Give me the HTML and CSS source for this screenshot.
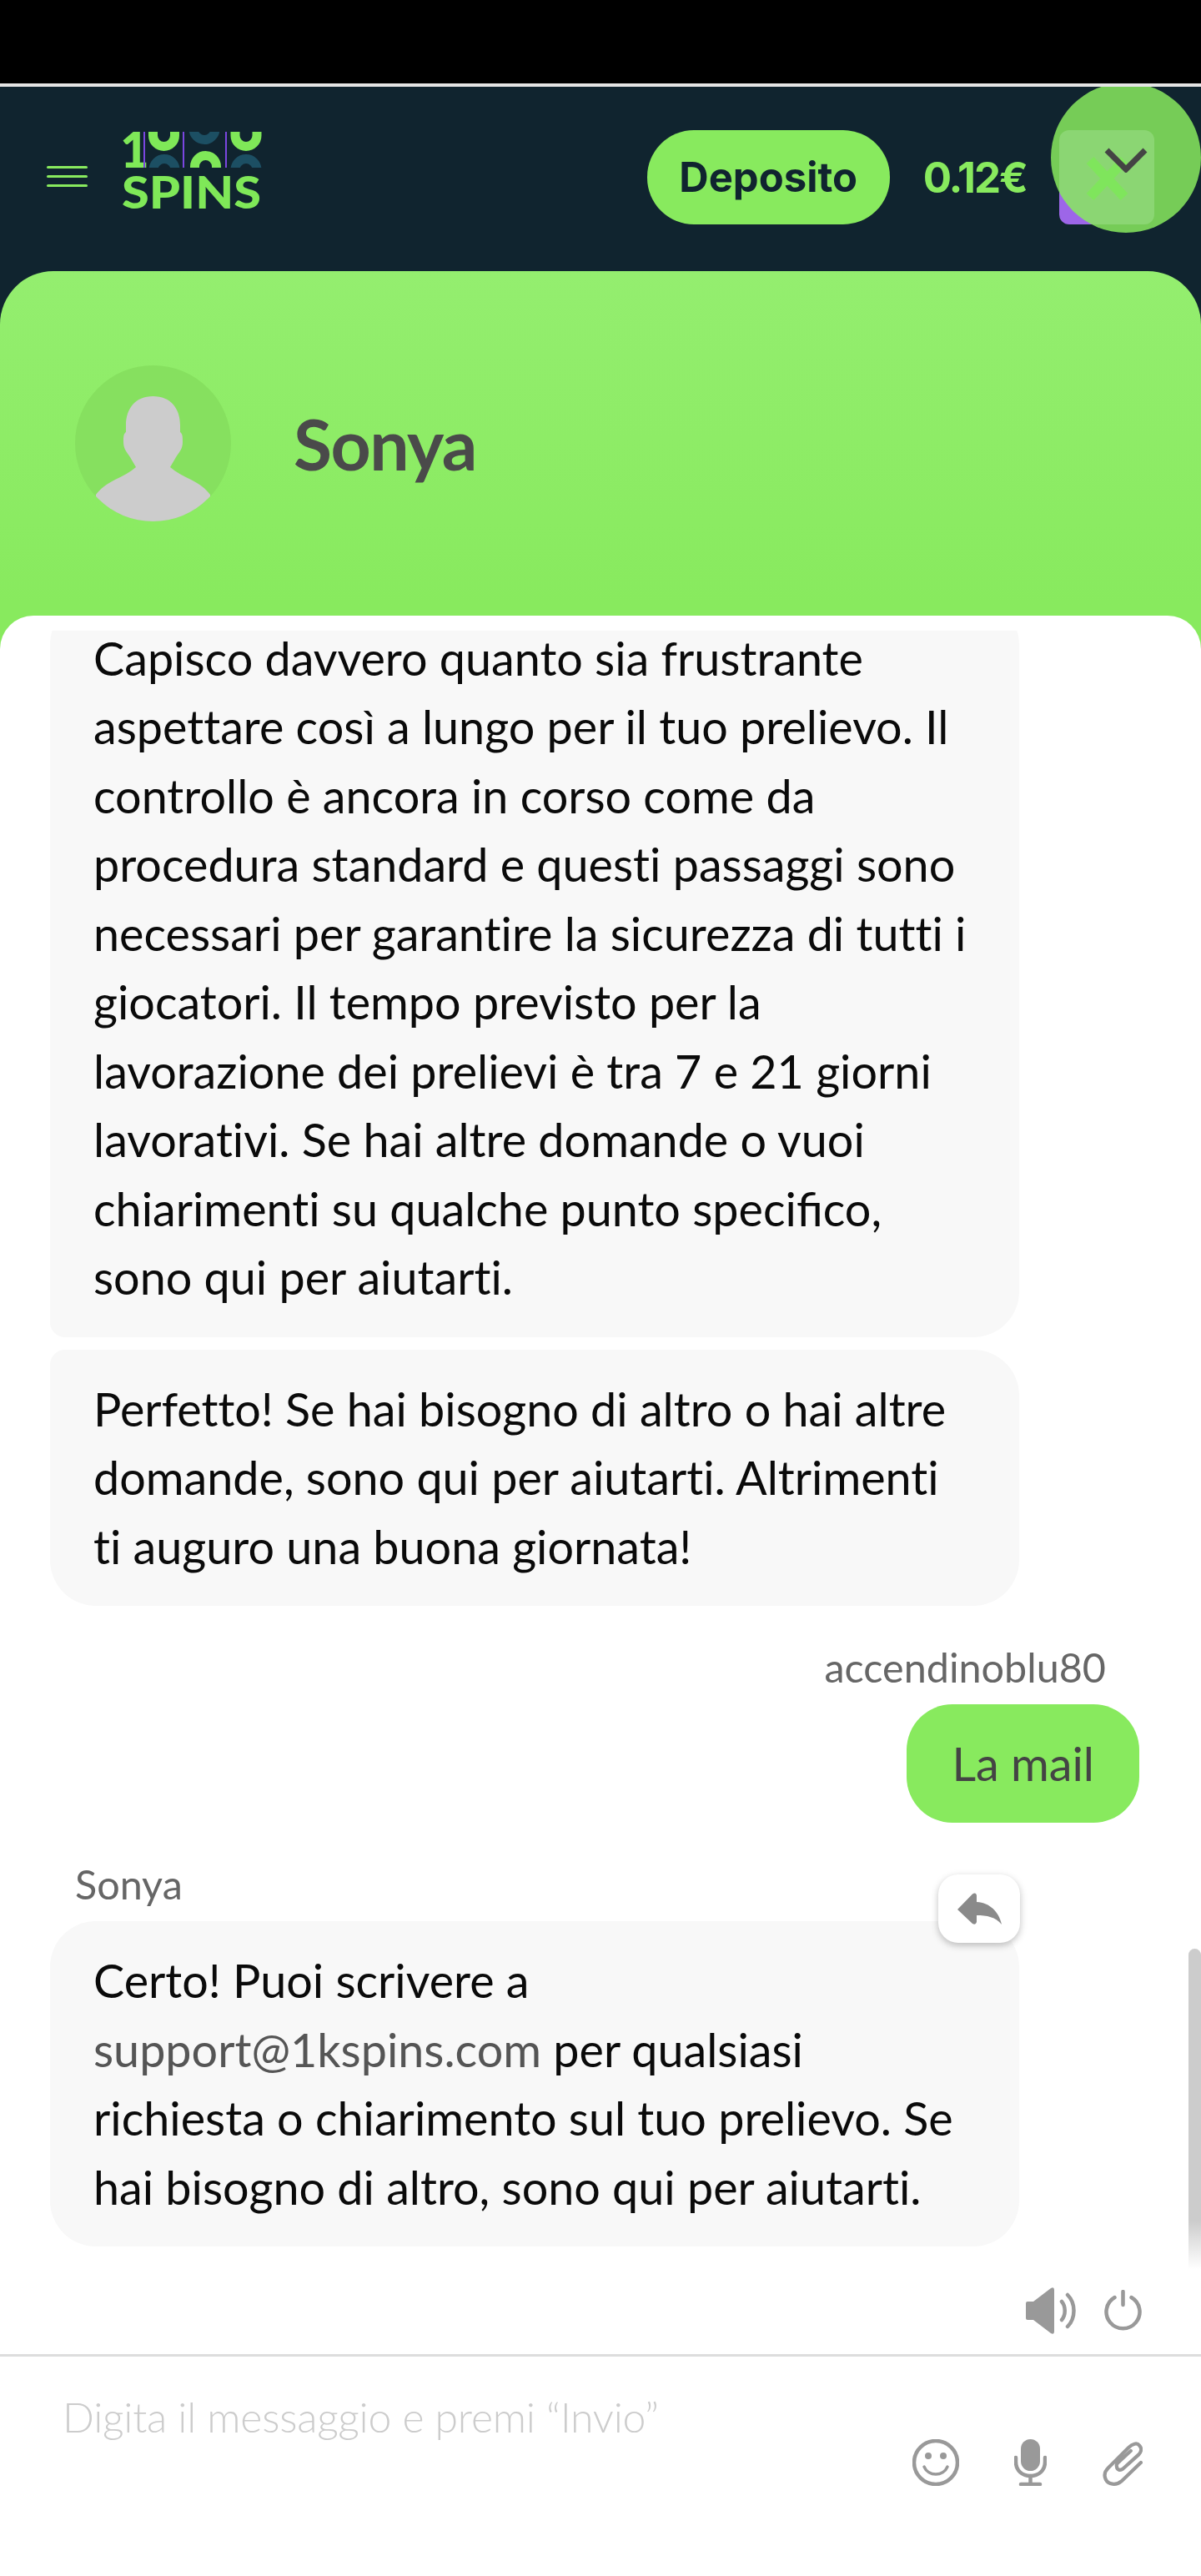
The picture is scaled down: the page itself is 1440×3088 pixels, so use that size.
FILE: index.html
```html
<!DOCTYPE html>
<html>
<head>
  <title>Sonya - Chat</title>
  <link rel="stylesheet" href="styles.css">
</head>
<body>
  <div class="status-bar"></div>

  <header class="site-header">
    <div class="burger"><span></span><span></span><span></span></div>

    <svg class="logo" viewBox="146 157 168 93">
      <defs><clipPath id="logo-row"><rect x="146" y="157" width="168" height="43"/></clipPath></defs>
      <text class="logo-one" x="144" y="200">1</text>
      <path class="logo-bar" d="M173 157V200M220 157V200M271 157V200"/>
      <g clip-path="url(#logo-row)">
        <path class="logo-green" d="M183.500 150V161.500A13 13 0 0 0 209.500 161.500V150"/>
        <path class="logo-dark" d="M232 150V153.500A13 13 0 0 0 258 153.500V150"/>
        <path class="logo-green" d="M282 150V161.500A13 13 0 0 0 308 161.500V150"/>
        <path class="logo-dark" d="M184 210V202.500A13 13 0 0 1 210 202.500V210"/>
        <path class="logo-green" d="M233.500 210V198.500A13 13 0 0 1 259.500 198.500V210"/>
        <path class="logo-dark" d="M282 210V202.500A13 13 0 0 1 308 202.500V210"/>
      </g>
      <text class="logo-word" x="146" y="249" textLength="167" lengthAdjust="spacingAndGlyphs">SPINS</text>
    </svg>

    <a class="deposit-btn">Deposito</a>
    <span class="balance">0.12€</span>
    <div class="user-badge">
      <svg viewBox="0 0 114 113"><path d="M37 36L78 80M78 36L37 80" /></svg>
    </div>

    <button class="minimize-btn">
      <svg viewBox="0 0 52 30"><path d="M3 3L26 26L49 3"/></svg>
    </button>
  </header>

  <section class="chat">
    <div class="chat-head">
      <svg class="avatar" viewBox="0 0 187 187">
        <defs><clipPath id="avatar-clip"><circle cx="93.500" cy="93.500" r="93.500"/></clipPath></defs>
        <circle class="avatar-bg" cx="93.500" cy="93.500" r="93.500"/>
        <path class="avatar-person" clip-path="url(#avatar-clip)" d="M93.500 37C72 37 61 52 61 72V80C58 82 58 86 58 92C58 100 62 104 66 110L73 122C66 128 58 132 48 137C38 142 30 148 25 155L25 187H162V155C157 148 149 142 139 137C129 132 121 128 114 122L121 110C125 104 129 100 129 92C129 86 129 82 126 80V72C126 52 115 37 93.500 37Z"/>
      </svg>
      <h1 class="agent-name">Sonya</h1>
    </div>

    <div class="chat-body">
      <div class="messages">
        <div class="bubble agent first">Capisco davvero quanto sia frustrante aspettare così a lungo per il tuo prelievo. Il controllo è ancora in corso come da procedura standard e questi passaggi sono necessari per garantire la sicurezza di tutti i giocatori. Il tempo previsto per la lavorazione dei prelievi è tra 7 e 21 giorni lavorativi. Se hai altre domande o vuoi chiarimenti su qualche punto <span class="lig">specifico</span>, sono qui per aiutarti.</div>
        <div class="bubble agent second">Perfetto! Se hai bisogno di altro o hai altre domande, sono qui per aiutarti. Altrimenti ti auguro una buona giornata!</div>

        <div class="sender sender-user">accendinoblu80</div>
        <div class="bubble user">La mail</div>

        <div class="sender sender-agent">Sonya</div>
        <div class="bubble-wrap">
          <div class="bubble agent">Certo! Puoi scrivere a <a class="mail-link">support@1kspins.com</a> per qualsiasi richiesta o chiarimento sul tuo prelievo. Se hai bisogno di altro, sono qui per aiutarti.</div>
          <button class="reply-btn">
            <svg viewBox="0 0 53 38"><path d="M0 20L18 1.500Q22 -1 23 3V11C40 12 50 24 53 38C46 29 35 27 23 27V35Q22 39 18 37Z"/></svg>
          </button>
        </div>
        <div class="scrollbar"></div>
      </div>

      <div class="controls">
        <svg class="icon-sound" viewBox="0 0 60 56">
          <path class="fill" d="M2 17H9L30 1Q34 -1 34 3V53Q34 57 30 55L9 39H2Q0 39 0 37V19Q0 17 2 17Z"/>
          <path class="line" d="M43 17C48 23 48 33 43 39M50 9C60 19 60 37 50 47"/>
        </svg>
        <svg class="icon-power" viewBox="0 0 45 49">
          <path class="line" d="M12.500 9A20 20 0 1 0 32.500 9"/>
          <path class="line" d="M22.500 2V18"/>
        </svg>
      </div>

      <div class="composer">
        <div class="placeholder">Digita il messaggio e premi “Invio”</div>
        <div class="composer-tools">
          <svg class="icon-smile" viewBox="0 0 56 56">
            <circle class="line" cx="28" cy="28" r="26"/>
            <circle class="fill" cx="19" cy="20" r="4"/>
            <circle class="fill" cx="37" cy="20" r="4"/>
            <path class="line thin" d="M14 33C19 45 37 45 42 33"/>
          </svg>
          <svg class="icon-mic" viewBox="0 0 39 56">
            <rect class="fill" x="8" y="0" width="23" height="38" rx="11.500"/>
            <path class="line" d="M2 22V27C2 38 10 44 19.500 44C29 44 37 38 37 27V22"/>
            <path class="line" d="M19.500 44V53"/>
            <path class="line" d="M8 54H31"/>
          </svg>
          <svg class="icon-clip" viewBox="0 0 52 60">
            <path class="line" d="M50 30L25 54C18 60 8 58 5 52C2 46 4 41 8 37L34 11C39 6 45 4 48 8C52 12 50 17 47 20L27 38C23 41 19 39 19 35C18 33 20 30 23 28L37 15"/>
          </svg>
        </div>
      </div>
    </div>
  </section>
</body>
</html>
```

FILE: styles.css
```css
* {
  box-sizing: border-box;
}

body {
  margin: 0;
  height: 3088px;
  display: flex;
  flex-direction: column;
  font-family: Lato, "Open Sans", sans-serif;
  font-variant-ligatures: none;
  background-color: #10242f;
  overflow: hidden;
}

.status-bar {
  height: 104px;
  background-color: #000;
  border-bottom: 4px solid #e4e4e4;
  flex-shrink: 0;
}

/* site header */
.site-header {
  position: relative;
  height: 221px;
  flex-shrink: 0;
  display: flex;
  align-items: center;
  padding: 0 56px;
  overflow: hidden;
}

.burger {
  width: 49px;
  display: flex;
  flex-direction: column;
  gap: 8px;
  margin-top: -7px;
}

.burger span {
  height: 3px;
  border-radius: 2px;
  background-color: #88ea5e;
}

.logo {
  width: 168px;
  height: 93px;
  margin-left: 41px;
  margin-top: -20px;
}

.logo-one {
  font-family: Lato, sans-serif;
  font-weight: 900;
  font-size: 60px;
  fill: #7fe858;
}

.logo-word {
  font-family: Lato, sans-serif;
  font-weight: 900;
  font-size: 54px;
  fill: #7fe858;
}

.logo-bar {
  stroke: #7a46e0;
  stroke-width: 2;
  fill: none;
}

.logo-green,
.logo-dark {
  fill: none;
  stroke-width: 11;
}

.logo-green {
  stroke: #7fe858;
}

.logo-dark {
  stroke: #1c4f63;
}

.deposit-btn {
  margin-left: auto;
  width: 291px;
  height: 113px;
  border-radius: 56px;
  background-color: #88ea5e;
  color: #10242f;
  font-family: Inter, sans-serif;
  font-weight: 700;
  font-size: 49px;
  display: flex;
  align-items: center;
  justify-content: center;
  margin-top: -4px;
}

.balance {
  margin-left: 40px;
  color: #88ea5e;
  font-family: Inter, sans-serif;
  font-weight: 700;
  font-size: 51px;
  letter-spacing: -2px;
  margin-top: -4px;
}

.user-badge {
  width: 114px;
  height: 113px;
  margin-left: 39px;
  margin-top: -4px;
  border-radius: 12px;
  background-color: #9d66e8;
}

.user-badge svg {
  display: block;
}

.user-badge path {
  stroke: #4cc850;
  stroke-width: 12;
  fill: none;
}

.minimize-btn {
  position: absolute;
  top: -5px;
  right: 0;
  width: 180px;
  height: 180px;
  border: none;
  padding: 6px 0 0;
  border-radius: 50%;
  background-color: rgba(136, 234, 94, 0.85);
  display: flex;
  align-items: center;
  justify-content: center;
}

.minimize-btn svg {
  width: 52px;
  height: 30px;
}

.minimize-btn path {
  fill: none;
  stroke: #444;
  stroke-width: 7;
}

/* chat widget */
.chat {
  flex: 1;
  min-height: 0;
  display: flex;
  flex-direction: column;
  border-radius: 64px 64px 0 0;
  background: linear-gradient(to bottom, #94ee6f 0, #88ea5e 400px);
}

.chat-head {
  height: 413px;
  flex-shrink: 0;
  display: flex;
  align-items: flex-start;
  padding: 113px 0 0 90px;
}

.avatar {
  width: 187px;
  height: 187px;
}

.avatar-bg {
  fill: #86e05f;
}

.avatar-person {
  fill: #ccc;
}

.agent-name {
  margin: 0 0 0 75px;
  color: #4a4a4a;
  font-weight: 700;
  font-size: 84px;
  letter-spacing: -1.500px;
  line-height: 187px;
}

.chat-body {
  flex: 1;
  min-height: 0;
  display: flex;
  flex-direction: column;
  background-color: #fff;
  border-radius: 40px 40px 0 0;
}

.messages {
  position: relative;
  flex: 1;
  min-height: 0;
  margin-top: 18px;
  padding: 0 74px 27px 60px;
  display: flex;
  flex-direction: column;
  justify-content: flex-end;
  overflow: hidden;
}

.bubble {
  flex-shrink: 0;
  padding: 30px 50px 30px 52px;
  border-radius: 55px;
  font-size: 55.700px;
  line-height: 82.500px;
}

.bubble.agent {
  width: 1162px;
  background-color: #f8f8f8;
  color: #0a0a0a;
}

.lig {
  font-variant-ligatures: common-ligatures;
}

.bubble.first {
  border-bottom-left-radius: 18px;
}

.bubble.second {
  margin-top: 15px;
  border-top-left-radius: 18px;
}

.bubble.user {
  align-self: flex-end;
  padding: 30px 54px;
  background-color: #88ea5e;
  color: #444;
}

.mail-link {
  color: #555;
}

.sender {
  flex-shrink: 0;
  color: #666;
  font-size: 48.500px;
  line-height: 60px;
}

.sender-user {
  margin-top: 43px;
  margin-bottom: 14.500px;
  text-align: right;
  padding-right: 40px;
}

.sender-agent {
  margin-top: 43px;
  margin-bottom: 15px;
  padding-left: 30px;
}

.bubble-wrap {
  position: relative;
  flex-shrink: 0;
}

.reply-btn {
  position: absolute;
  top: -56px;
  left: 1065px;
  width: 98px;
  height: 82px;
  border: none;
  padding: 0;
  border-radius: 24px;
  background-color: #fff;
  box-shadow: 0 3px 8px rgba(0, 0, 0, 0.25);
  display: flex;
  align-items: center;
  justify-content: center;
}

.reply-btn svg {
  width: 53px;
  height: 38px;
}

.reply-btn path {
  fill: #8a8a8a;
}

.scrollbar {
  position: absolute;
  top: 1580px;
  right: 0;
  bottom: 0;
  width: 15px;
  border-radius: 8px 8px 0 0;
  background: linear-gradient(to bottom, #ccc 0, #ccc 85%, #fff 100%);
}

/* icons */
.line {
  fill: none;
  stroke: #999;
  stroke-width: 4.500;
  stroke-linecap: round;
}

.line.thin {
  stroke-width: 3.500;
}

.fill {
  fill: #999;
}

.controls {
  height: 102px;
  flex-shrink: 0;
  display: flex;
  justify-content: flex-end;
  align-items: center;
  gap: 34px;
  padding: 0 71px 3px 0;
}

.icon-sound {
  width: 60px;
  height: 56px;
}

.icon-power {
  width: 45px;
  height: 49px;
}

.composer {
  position: relative;
  height: 266px;
  flex-shrink: 0;
  border-top: 3px solid #ddd;
}

.placeholder {
  padding: 42px 0 0 75px;
  color: #ccc;
  font-weight: 300;
  font-size: 50px;
  letter-spacing: -0.250px;
  line-height: 60px;
}

.composer-tools {
  position: absolute;
  top: 99px;
  right: 70px;
  display: flex;
  align-items: center;
  gap: 66px;
}

.icon-smile {
  width: 56px;
  height: 56px;
}

.icon-mic {
  width: 39px;
  height: 56px;
}

.icon-clip {
  width: 49px;
  height: 56px;
}
```
